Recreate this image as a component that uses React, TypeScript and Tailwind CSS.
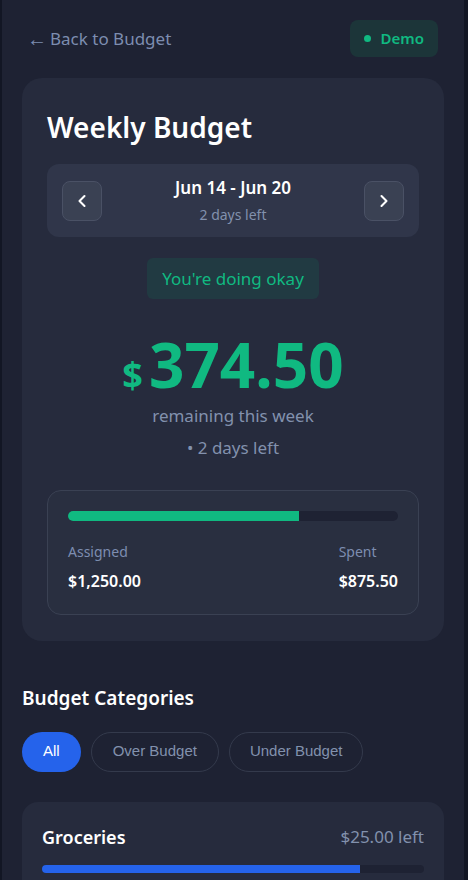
import { ChevronLeft, ChevronRight } from "lucide-react";

const font = { fontFamily: '"Segoe UI", "Noto Sans", sans-serif' };

function App() {
  const assigned = 1250;
  const spent = 875.5;
  const pct = (spent / assigned) * 100;

  return (
    <div className="min-h-screen bg-[#121624] pl-[2px] pr-[4px]" style={font}>
      <div className="min-h-screen bg-[#1e2233] px-5 pt-5 pb-6">
        <div className="flex items-center justify-between">
          <a className="text-[17px] text-[#7d8db0] pl-[5px] flex items-center">
            <span className="text-[20px] leading-none mr-[3px]">←</span>Back to Budget
          </a>
          <div className="flex items-center gap-[10px] rounded-lg bg-[#1c3539] px-[14px] h-[37px] mr-[6px]">
            <span className="w-[7px] h-[7px] rounded-full bg-[#10b981]" />
            <span className="text-[15px] font-semibold text-[#10b981]">Demo</span>
          </div>
        </div>

        <div className="mt-[21px] rounded-[20px] bg-[#262b3d] px-[25px] pt-[35px] pb-[26px]">
          <h1 className="text-[28px] font-semibold text-white leading-none">Weekly Budget</h1>

          <div className="mt-[23px] flex items-center justify-between rounded-xl bg-[#30364a] px-[15px] h-[73px]">
            <button className="w-[40px] h-[40px] rounded-lg bg-[#3a4153] border border-[#4a5165] flex items-center justify-center text-white">
              <ChevronLeft size={20} strokeWidth={2.5} />
            </button>
            <div className="flex flex-col items-center">
              <div className="text-[17px] font-semibold text-white leading-[22px]">Jun 14 - Jun 20</div>
              <div className="text-[14px] text-[#8291ad] mt-[7px] leading-[18px]">2 days left</div>
            </div>
            <button className="w-[40px] h-[40px] rounded-lg bg-[#3a4153] border border-[#4a5165] flex items-center justify-center text-white">
              <ChevronRight size={20} strokeWidth={2.5} />
            </button>
          </div>

          <div className="mt-[21px] flex justify-center">
            <div className="rounded-md bg-[#213a42] px-[15px] h-[41px] flex items-center text-[17px] text-[#10b981]">
              You're doing okay
            </div>
          </div>

          <div className="mt-[34px] flex items-baseline justify-center text-[#10b981] font-bold">
            <span className="text-[36px] mr-[6px]">$</span>
            <span className="text-[62px] leading-none">374.50</span>
          </div>
          <div className="mt-[1px] text-center text-[17px] text-[#8291ad]">remaining this week</div>
          <div className="mt-[6px] text-center text-[17px] text-[#8291ad]">• 2 days left</div>

          <div className="mt-[30px] rounded-[14px] border border-[#3a4153] bg-[#292f40] px-[20px] pt-[20px] pb-[21px]">
            <div className="h-[10px] rounded-full bg-[#1e2233] overflow-hidden">
              <div className="h-full bg-[#10b981]" style={{ width: `${pct}%` }} />
            </div>
            <div className="mt-[20px] flex justify-between">
              <div>
                <div className="text-[14px] text-[#7d8db0]">Assigned</div>
                <div className="mt-[7px] text-[16px] font-semibold text-white">$1,250.00</div>
              </div>
              <div>
                <div className="text-[14px] text-[#7d8db0]">Spent</div>
                <div className="mt-[7px] text-[16px] font-semibold text-white">$875.50</div>
              </div>
            </div>
          </div>
        </div>

        <h2 className="mt-[43px] text-[19px] font-semibold text-white">Budget Categories</h2>
        <div className="mt-[19px] flex gap-[10px]" style={{ fontFamily: '"Liberation Sans", Arial, sans-serif' }}>
          <button className="h-[40px] px-[21px] rounded-full bg-[#2563eb] text-white text-[15px]">All</button>
          <button className="h-[40px] px-[21px] rounded-full border border-[#343a4c] text-[#8291ad] text-[15px]">Over Budget</button>
          <button className="h-[40px] px-[20px] rounded-full border border-[#343a4c] text-[#8291ad] text-[15px]">Under Budget</button>
        </div>

        <div className="mt-[30px] rounded-2xl bg-[#262b3d] px-[20px] pt-[22px] pb-[20px]">
          <div className="flex items-center justify-between">
            <span className="text-[18px] font-semibold text-white">Groceries</span>
            <span className="text-[17px] text-[#8291ad]">$25.00 left</span>
          </div>
          <div className="mt-[14px] h-[8px] rounded-full bg-[#1e2233] overflow-hidden">
            <div className="h-full bg-[#2563eb]" style={{ width: "83.3%" }} />
          </div>
          <div className="mt-[20px] h-[40px]" />
        </div>
      </div>
    </div>
  );
}

export default App;
